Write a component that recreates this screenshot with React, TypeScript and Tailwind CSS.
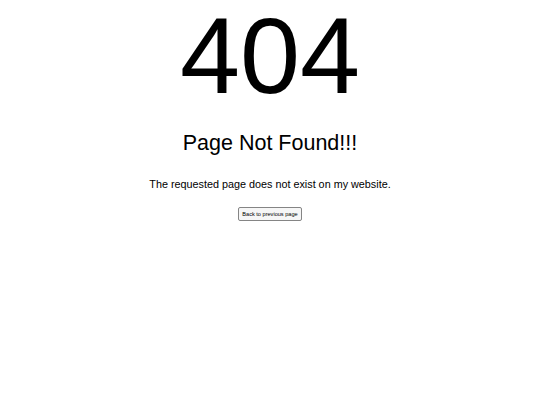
export default function App() {
  return (
    <div className="flex min-h-[405px] flex-col items-center bg-white text-black" style={{ fontFamily: '"Liberation Sans", Arial, sans-serif' }}>
      <h1 className="mt-[2px] text-[108px] font-normal leading-[108px]">404</h1>
      <h2 className="mt-[22px] text-[21.5px] font-normal leading-[22px]">Page Not Found!!!</h2>
      <p className="mt-[24px] text-[10.8px] leading-[13px]">The requested page does not exist on my website.</p>
      <button
        className="mt-[16px] rounded-[2px] border border-[#858585] bg-[#f6f6f6] px-[3px] py-[1.5px] text-[5.6px] leading-[9px]"
        style={{ fontFamily: '"Liberation Sans", Arial, sans-serif' }}
      >
        Back to previous page
      </button>
    </div>
  );
}
